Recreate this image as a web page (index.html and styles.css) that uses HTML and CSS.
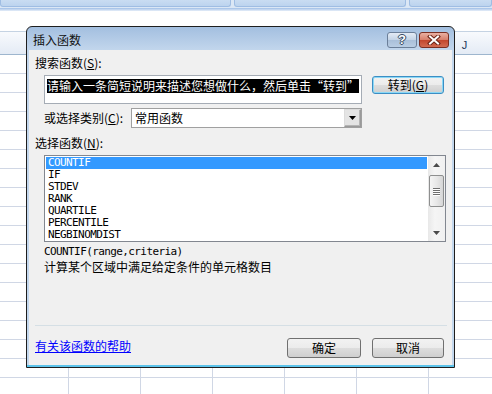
FILE: index.html
```html
<!DOCTYPE html>
<html lang="zh-CN">
<head>
<meta charset="utf-8">
<title>插入函数</title>
<link rel="stylesheet" href="styles.css">
</head>
<body>
<div class="app">
  <div class="ribbon">
    <div class="tab t1"></div>
    <div class="tab t2"></div>
    <div class="tab t3"></div>
  </div>
  <div class="ribbon-foot"></div>
  <div class="formula-gap"></div>
  <div class="col-head">
    <div class="col"></div><div class="col"></div><div class="col"></div><div class="col"></div>
    <div class="col"></div><div class="col"></div><div class="col">J</div>
  </div>
  <div class="sheet"></div>

  <div class="dialog">
    <div class="titlebar">
      <span class="title">插入函数</span>
      <div class="tb-btn help"><span>?</span></div>
      <div class="tb-btn close">
        <svg width="14" height="10" viewBox="0 0 14 10"><path d="M3 1.5 L11 8.5 M11 1.5 L3 8.5" stroke="#6b2316" stroke-width="4" stroke-linecap="square"/><path d="M3 1.5 L11 8.5 M11 1.5 L3 8.5" stroke="#ffffff" stroke-width="2" stroke-linecap="square"/></svg>
      </div>
    </div>
    <div class="body">
      <div class="lbl">搜索函数(<u>S</u>):</div>
      <div class="search-row">
        <div class="searchbox"><span class="sel">请输入一条简短说明来描述您想做什么，然后单击“转到”</span></div>
        <div class="btn default">转到(<u>G</u>)</div>
      </div>
      <div class="cat-row">
        <div class="cat-lbl">或选择类别(<u>C</u>):</div>
        <div class="select">
          <span class="sel-val">常用函数</span>
          <div class="drop"><svg width="7" height="4" viewBox="0 0 7 4"><polygon points="0,0 7,0 3.5,4" fill="#000"/></svg></div>
        </div>
      </div>
      <div class="lbl lbl2">选择函数(<u>N</u>):</div>
      <div class="list">
        <div class="items">
          <div class="item on">COUNTIF</div>
          <div class="item">IF</div>
          <div class="item">STDEV</div>
          <div class="item">RANK</div>
          <div class="item">QUARTILE</div>
          <div class="item">PERCENTILE</div>
          <div class="item">NEGBINOMDIST</div>
        </div>
        <div class="scroll">
          <div class="arrow"><svg width="7" height="4" viewBox="0 0 7 4"><polygon points="3.5,0 7,4 0,4" fill="#4a4a4a"/></svg></div>
          <div class="thumb"><i></i><i></i><i></i><i></i></div>
          <div class="track"></div>
          <div class="arrow"><svg width="7" height="4" viewBox="0 0 7 4"><polygon points="0,0 7,0 3.5,4" fill="#4a4a4a"/></svg></div>
        </div>
      </div>
      <div class="syntax">COUNTIF(range,criteria)</div>
      <div class="desc">计算某个区域中满足给定条件的单元格数目</div>
      <div class="sep"></div>
      <div class="foot">
        <a class="link" href="#">有关该函数的帮助</a>
        <div class="btn ok">确定</div>
        <div class="btn cancel">取消</div>
      </div>
    </div>
  </div>
</div>
</body>
</html>
```

FILE: styles.css
```css
* { box-sizing: border-box; margin: 0; padding: 0; }
html, body { width: 492px; height: 394px; overflow: hidden; background: #ffffff; }
body { font-family: "Noto Sans CJK SC", "Liberation Sans", sans-serif; font-size: 12px; color: #000; }
.app { position: relative; width: 492px; height: 394px; }

.ribbon { height: 8px; display: flex; background: #dbe7f5; }
.tab { height: 7px; background: linear-gradient(#c9dcf2, #bcd3ee); border: 1px solid #9fbde3; border-top: none; border-radius: 0 0 3px 3px; }
.t1 { width: 231px; }
.t2 { width: 172px; margin-left: 3px; }
.t3 { flex: 1; margin-left: 3px; }
.ribbon-foot { height: 3px; background: linear-gradient(#9fbee6, #e6eef9); }
.formula-gap { height: 20px; background: #fff; }

.col-head {
  height: 24px;
  display: grid;
  grid-template-columns: 68px repeat(6, 72px);
  border-top: 1px solid #c5d3e3;
  border-bottom: 1px solid #9eb6ce;
  background: linear-gradient(#f8fafd, #e4ebf5);
}
.col { border-left: 1px solid #c5d3e3; display: flex; align-items: center; justify-content: center; font-family: "Liberation Sans", sans-serif; font-size: 11px; color: #1e395b; padding-top: 4px; }
.col:first-child { border-left: none; }

.sheet {
  height: 339px;
  background-image:
    linear-gradient(to right, #d0d7e5 1px, transparent 1px),
    linear-gradient(to bottom, #d0d7e5 1px, transparent 1px);
  background-size: 72px 100%, 100% 19px;
  background-position: 68px 0, 0 18px;
}

.dialog {
  position: absolute; left: 26px; top: 26px;
  width: 429px; height: 342px;
  border: 1px solid #1e1e1e;
  border-radius: 6px 6px 0 0;
  background: linear-gradient(#a3bfe0 0, #c2d6ec 23px, #c4d8ee calc(100% - 2px), #5cc3ea calc(100% - 2px));
  padding: 0 2px 2px;
  display: flex; flex-direction: column;
}
.titlebar { height: 23px; margin: 0 -2px; display: flex; align-items: center; padding: 0 5px 0 6px; }
.title { flex: 1; font-size: 12px; color: #111; padding-top: 2px; }
.tb-btn { width: 30px; height: 16px; margin-top: 3px; border-radius: 3px; display: flex; align-items: center; justify-content: center; }
.help { border: 1px solid #6b7f99; background: linear-gradient(#e3ebf5, #c3d3e6 50%, #a9bfd9 51%, #b9cde3); margin-right: 2px; }
.help span { font-family: "Liberation Sans", sans-serif; font-weight: bold; font-size: 13px; color: #fff; line-height: 14px; text-shadow: 0 0 1px #2d3e57, 1px 0 0 #3a4d68, -1px 0 0 #3a4d68, 0 1px 0 #3a4d68, 0 -1px 0 #3a4d68; }
.close { border: 1px solid #7a2e22; background: linear-gradient(#eab0a2, #d77d69 50%, #c2452c 51%, #d26b52); }
.close svg { display: block; }

.body { flex: 1; background: #f0f0f0; padding: 7px 8px 0 6px; display: flex; flex-direction: column; }
.lbl { height: 12px; line-height: 12px; }
.lbl2 { margin-top: 9px; }
u { text-decoration: underline; }

.search-row { display: flex; margin-top: 6px; height: 29px; }
.searchbox { margin-left: 9px; width: 318px; height: 29px; border: 1px solid #a5acb5; background: #fff; padding: 1px 0 0 2px; }
.sel { display: inline-block; background: #000; color: #fff; line-height: 14px; white-space: nowrap; }

.btn { height: 20px; border: 1px solid #707070; border-radius: 3px; background: linear-gradient(#f2f2f2, #ebebeb 50%, #dddddd 51%, #cfcfcf); display: flex; align-items: center; justify-content: center; line-height: 12px; }
.default { margin-left: 10px; width: 72px; height: 18px; margin-top: 1px; border-color: #3c8ec4; box-shadow: inset 0 0 0 1px #8ad8f6; }

.cat-row { display: flex; margin-top: 4px; height: 20px; }
.cat-lbl { margin-left: 9px; width: 87px; line-height: 20px; }
.select { width: 231px; height: 20px; border: 1px solid #a0a0a0; background: #fff; display: flex; align-items: center; }
.sel-val { flex: 1; padding-left: 3px; line-height: 18px; }
.drop { width: 17px; height: 18px; border: 1px solid #9a9a9a; border-top-color: #dcdcdc; border-left-color: #dcdcdc; background: #e4e4e4; display: flex; align-items: center; justify-content: center; box-shadow: inset -1px -1px 0 #b5b5b5; }

.list { margin-left: 9px; margin-top: 6px; width: 402px; height: 87px; border: 1px solid #828790; background: #fff; display: flex; }
.items { flex: 1; padding: 1px; }
.item { height: 12px; line-height: 12px; padding-left: 2px; font-family: "DejaVu Sans Mono", monospace; font-size: 11px; letter-spacing: -0.6px; color: #000; }
.item.on { background: #3399ff; color: #fff; }
.scroll { width: 17px; display: flex; flex-direction: column; background: linear-gradient(to right, #e8e8e8, #f5f5f5 40%, #f0f0f0); }
.arrow { height: 17px; display: flex; align-items: center; justify-content: center; }
.thumb { margin: 2px 1px 0; height: 32px; border: 1px solid #8e8f8f; border-radius: 2px; background: linear-gradient(to right, #f5f5f5, #e8e8e8 50%, #d6d6d6); display: flex; flex-direction: column; align-items: center; justify-content: center; gap: 1px; }
.thumb i { display: block; width: 7px; height: 1px; background: #6f6f6f; box-shadow: 0 1px 0 #fff; }
.track { flex: 1; }

.syntax { margin-left: 9px; margin-top: 4px; height: 12px; line-height: 12px; font-family: "DejaVu Sans Mono", monospace; font-size: 11px; letter-spacing: -0.6px; }
.desc { margin-left: 9px; margin-top: 3px; height: 12px; line-height: 12px; }
.sep { margin-top: 52px; width: 412px; height: 1px; background: #d5dfe5; }

.foot { display: flex; margin-top: 12px; height: 20px; }
.link { color: #0000ff; text-decoration: underline; line-height: 12px; margin-top: 2px; }
.ok { margin-left: auto; width: 74px; }
.cancel { margin-left: 11px; width: 72px; }
```
